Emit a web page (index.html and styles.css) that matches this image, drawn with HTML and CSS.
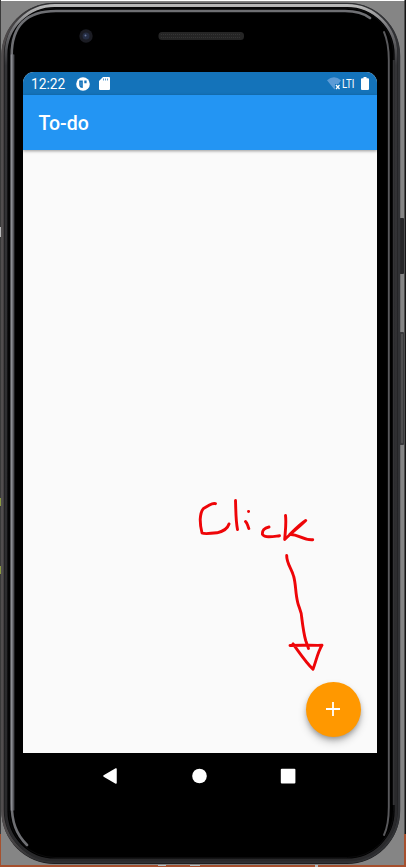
FILE: index.html
```html
<!DOCTYPE html>
<html lang="en">
<head>
<meta charset="utf-8">
<title>To-do</title>
<link rel="stylesheet" href="styles.css">
</head>
<body>
<main class="device">
  <svg class="frame" viewBox="0 0 406 867" aria-hidden="true">
    <defs>
      <linearGradient id="shell" x2="1" y2="0"><stop offset="0" stop-color="#514d4e"/><stop offset=".08" stop-color="#303032"/><stop offset="1" stop-color="#303134"/></linearGradient>
      <linearGradient id="rim" x1="0" y1="0" x2="0" y2="1"><stop offset="0" stop-color="#b8b8b8"/><stop offset=".025" stop-color="#77777a"/><stop offset=".07" stop-color="#343437"/><stop offset="1" stop-color="#29292b"/></linearGradient>
    </defs>
    <path fill="#858585" d="M0 0h406v867H0z"/>
    <path fill="#fff" d="M0 0h406v1H0z"/>
    <path fill="#3a3a3a" d="M0 0h1v867H0z"/>
    <path fill="#151515" d="M404.500 0H406v834h-1.500z"/>
    <path fill="#a6502e" d="M0 865h406v2H0zM0 834h1v33H0zM404 834h2v33h-2z"/>
    <path fill="#bbb" d="M0 227h1v10H0zM158 865h8v1h-8zM190 865h10v1h-10zM315 865h3v2h-3z"/>
    <rect x="399.500" y="218" width="4.500" height="56" rx="1" fill="#252527"/>
    <rect x="399.500" y="332" width="4.500" height="113" rx="1" fill="#39393b"/>
    <path d="M402 334v109" stroke="#777" stroke-width=".7"/>
    <rect x="1.500" y="3" width="398.500" height="861" rx="53" fill="#181819"/>
    <rect x="2.500" y="4" width="396.500" height="858" rx="52" fill="none" stroke="url(#shell)" stroke-width="2.500"/>
    <rect x="6" y="5.500" width="390" height="854.500" rx="49" fill="#000" stroke="url(#rim)" stroke-width="2.800"/>
    <rect x="9" y="8" width="384.500" height="849.500" rx="46" fill="#000" stroke="#0b0b0c"/>
    <path d="M393.800 60v745" stroke="#343436" stroke-width="2"/>
    <g fill="none" stroke-linecap="round">
      <path d="M27 845C16 834 11.700 822 11.700 803V55Q11.700 11 56 11H345Q361 11 370 18" stroke="#6e6f73" stroke-width="2.600"/>
      <path d="M13.600 810V55" stroke="#505156" stroke-width="1.500"/>
      <path d="M11.500 810V55" stroke="#8b8d93" stroke-width="1.500"/>
      <path d="M384 32Q388.800 43 388.800 60V807Q388.800 825 384 835" stroke="#59595c" stroke-width="1.900"/>
    </g>
    <path d="M.5 498v8M.5 566v8" stroke="#8a9940"/>
    <circle cx="86" cy="36" r="6.700" fill="#1b1c23"/><circle cx="86" cy="36" r="3.500" fill="#252d43"/><circle cx="85.500" cy="35.500" r="1" fill="#66759b"/>
    <rect x="158.500" y="32" width="85.500" height="8" rx="3.500" fill="#252525"/>
    <path d="M161 34.500h80M161 37.500h80" stroke="#353535" stroke-dasharray="1 1"/>
  </svg>

  <section class="screen">
    <div class="status">
      <span class="time">12:22</span>
      <svg class="notice" width="14" height="14" viewBox="0 0 14 14"><circle cx="7" cy="7" r="6.800" fill="#fff"/><path d="M3.200 3.500h3.600v7.500c-2.300 0-3.600-1.300-3.600-3.300zM8.300 3.500h2.300v2.700H8.300z" fill="#1473ba"/><path d="M5 5v4" stroke="#4f98cf"/></svg>
      <svg class="card" width="11" height="13" viewBox="0 0 11 13"><path d="M4 0h6q1 0 1 1v11q0 1-1 1H1q-1 0-1-1V4z" fill="#fff"/><path d="M4.500 1.500v2M6.500 1.500v2M8.500 1.500v2" stroke="#5b9ed1"/></svg>
      <span class="space"></span>
      <svg class="wifi" width="15" height="14" viewBox="0 0 15 14"><path d="M0 3.200Q7-2.600 14 3.200L11.500 7H8v5.500L7 12z" fill="#5c9bd6"/><path d="m9 8 3.500 4M12.500 8 9 12" stroke="#fff" stroke-width="1.300"/></svg>
      <span class="network">LTI</span>
      <svg class="battery" width="8" height="13" viewBox="0 0 8 13"><path d="M2.500 0h3v1.200H7q1 0 1 1V12q0 1-1 1H1q-1 0-1-1V2.200q0-1 1-1h1.500z" fill="#fff"/></svg>
    </div>
    <header class="appbar"><h1>To-do</h1></header>
    <div class="content">
      <svg class="note" width="126" height="174" viewBox="196 498 126 174" aria-label="Click">
        <g fill="none" stroke="#ee0508" stroke-width="2.900" stroke-linecap="round" stroke-linejoin="round">
          <path d="M215.500 503.700c-2-.6-4 .2-6 1.300l-6 3.500c-2.500 2.500-3 6-3.300 11 0 5 .6 9 1.800 13.500 2 1.100 10 .4 15-.2 6-1.300 10.500-4 12-8.800M235.500 500.500c.4 10 .2 20 2 29M248.500 511.500h.1M245.500 521.500c2 1.500 2 4 3.300 7M269 527c-5 .8-7 4-6.500 7.500 3 4 11 2 17 1.200M285.500 515.500c1 8-.3 16-.8 24 6-6 15-13 21-19-5 3-11 9-16 14 8-1 13 6 23 5.200"/>
          <path d="M286.700 555.500c-.2 8 5 13 7 21 2.300 8 1.500 16 4 26 1 5 4 9 4 15 1 8 2 16 4 23l2.800 8M290 645.500c11-.7 21 0 32-.2-4 6-6 16-9 24-8-8-13-16-20-25.500"/>
        </g>
      </svg>
      <button class="add" aria-label="Add task"><svg width="14" height="14" viewBox="0 0 14 14"><path d="M7 0v14M0 7h14" stroke="#fff" stroke-width="1.800"/></svg></button>
    </div>
  </section>
  <nav class="nav">
    <svg width="16" height="16" viewBox="0 0 16 16"><path d="M14 1v14L2 8z" fill="#fff" stroke="#fff" stroke-width="1.500" stroke-linejoin="round"/></svg>
    <svg width="16" height="16" viewBox="0 0 16 16"><circle cx="8.500" cy="8" r="7.300" fill="#fff"/></svg>
    <svg width="16" height="16" viewBox="0 0 16 16"><rect x=".8" y=".8" width="14.600" height="14.600" rx="1" fill="#fff"/></svg>
  </nav>
</main>
</body>
</html>
```
FILE: styles.css
```css
* { box-sizing: border-box; }
body { margin: 0; overflow: hidden; background: #858585; font-family: Roboto, sans-serif; }
.device { position: relative; width: 406px; height: 867px; padding: 72px 29px 0 23px; display: flex; flex-direction: column; }
.frame { position: absolute; inset: 0; width: 406px; height: 867px; }
.screen { position: relative; height: 681px; display: flex; flex-direction: column; background: #fafafa; border-radius: 11px 11px 0 0; overflow: hidden; }
.status { height: 23px; flex: none; display: flex; align-items: center; padding: 0 8px; background: #1473ba; color: #fff; }
.time { width: 35px; font-size: 13.8px; line-height: 23px; margin-top: 1px; }
.notice { margin-left: 10px; }
.card { margin-left: 9px; }
.space { flex: 1; }
.network { width: 14px; margin: 0 5px 0 0; font-size: 13px; line-height: 22px; transform: scaleX(.74); transform-origin: left; }
.appbar { height: 55px; flex: none; display: flex; align-items: center; padding-left: 15.5px; background: #2395f3; box-shadow: 0 1px 3px #0006; position: relative; }
h1 { margin: 3px 0 0; color: #fff; font-size: 19.5px; line-height: 24px; font-weight: 500; }
.content { flex: 1; display: flex; flex-direction: column; padding: 348px 16px 16px 0; align-items: flex-end; }
.note { flex: none; margin-right: 39px; overflow: visible; }
.add { width: 55px; height: 55px; flex: none; margin-top: 9.5px; padding: 0 1px 1px 0; border: 0; border-radius: 50%; background: #ff9800; display: flex; align-items: center; justify-content: center; box-shadow: 0 3px 5px -1px #0004, 0 5px 9px #0003; }
.nav { position: relative; height: 46px; display: flex; align-items: center; justify-content: space-between; padding: 0 81px 0 79px; }
```
